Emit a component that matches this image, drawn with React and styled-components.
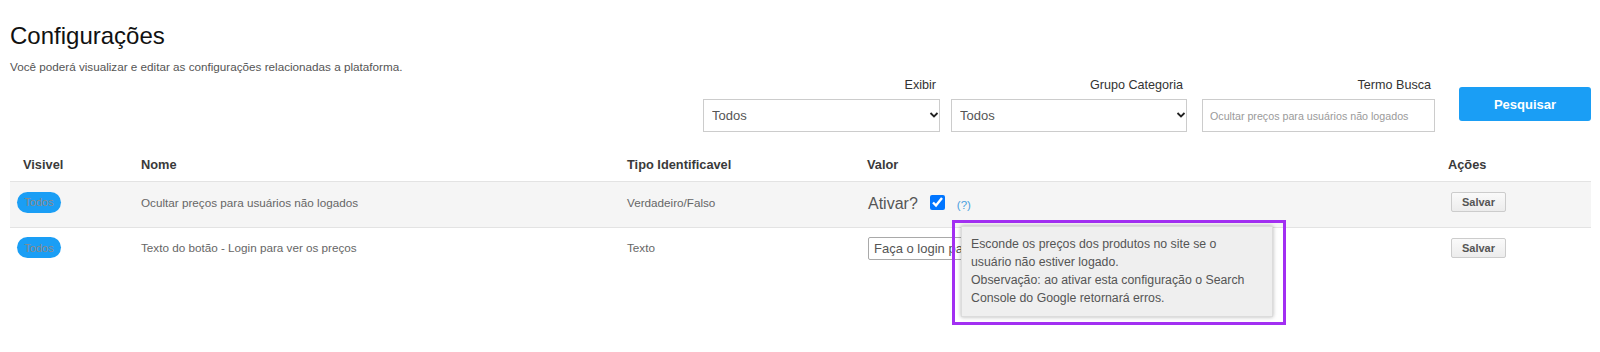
import React from "react";
import styled, { createGlobalStyle } from "styled-components";

const GlobalStyle = createGlobalStyle`
  html, body { margin: 0; padding: 0; background: #fff; }
  body { font-family: "Liberation Sans", Arial, sans-serif; }
  * { box-sizing: border-box; }
`;

const FONT = `"Liberation Sans", Arial, sans-serif`;

const Page = styled.div`
  width: 1600px;
  min-height: 352px;
  padding: 22px 9px 0 10px;
`;

const Title = styled.h1`
  margin: 0;
  font-size: 24px;
  line-height: 28px;
  font-weight: 400;
  color: #111;
`;

const Subtitle = styled.p`
  margin: 10px 0 0;
  font-size: 11.7px;
  line-height: 14px;
  color: #555;
`;

const Filters = styled.div`
  display: flex;
  justify-content: flex-end;
  align-items: flex-start;
  margin-top: 4px;
`;

const Field = styled.div`
  display: flex;
  flex-direction: column;
  width: ${(p) => p.$width}px;
  margin-left: ${(p) => p.$gap || 0}px;
`;

const Label = styled.label`
  font-size: 12.6px;
  line-height: 14px;
  color: #333;
  text-align: right;
  padding-right: 4px;
  margin-bottom: 7px;
`;

const SelectWrap = styled.div`
  position: relative;
`;

const Select = styled.select`
  appearance: none;
  width: 100%;
  height: 33px;
  border: 1px solid #ccc;
  border-radius: 0;
  background: #fff;
  padding: 0 20px 0 8px;
  font: 13px ${FONT};
  color: #555;
  outline: none;
`;

const Chevron = styled.svg`
  position: absolute;
  right: 1px;
  top: 13px;
  pointer-events: none;
`;

const SearchInput = styled.input`
  width: 100%;
  height: 33px;
  border: 1px solid #ccc;
  padding: 0 7px;
  font: 10.7px ${FONT};
  color: #555;
  outline: none;
  &::placeholder {
    color: #9a9a9a;
  }
`;

const SearchButton = styled.button`
  width: 132px;
  height: 34px;
  margin-left: 24px;
  margin-top: 9px;
  border: none;
  border-radius: 3px;
  background: #1a9ef5;
  color: #fff;
  font: 700 13px ${FONT};
  cursor: pointer;
`;

const COLS = "118px 486px 240px 581px 1fr";

const Table = styled.div`
  margin-top: 16px;
`;

const HeadRow = styled.div`
  display: grid;
  grid-template-columns: ${COLS};
  height: 34px;
  align-items: center;
  border-bottom: 1px solid #e3e3e3;
`;

const HeadCell = styled.div`
  padding-left: 13px;
  font-size: 12.8px;
  font-weight: 700;
  color: #3a3a3a;
`;

const Row = styled.div`
  display: grid;
  grid-template-columns: ${COLS};
  height: 45px;
  padding-bottom: 5px;
  align-items: center;
  background: ${(p) => (p.$shaded ? "#f5f5f5" : "transparent")};
  & + & {
    border-top: 1px solid #e3e3e3;
  }
`;

const Cell = styled.div`
  padding-left: ${(p) => (p.$pad != null ? p.$pad : 13)}px;
  font-size: 11.7px;
  color: #666;
`;

const Pill = styled.span`
  display: inline-flex;
  align-items: center;
  justify-content: center;
  width: 44px;
  height: 21px;
  border-radius: 11px;
  background: #1a9ef5;
  color: #8a8a8a;
  font-size: 11px;
`;

const ValueCell = styled.div`
  position: relative;
  align-self: stretch;
  display: flex;
  align-items: center;
  padding-left: 14px;
`;

const Ativar = styled.span`
  font-size: 16px;
  color: #555;
  margin-top: 3px;
`;

const Check = styled.input`
  width: 15px;
  height: 15px;
  margin: 0 0 0 12px;
  accent-color: #0075ff;
`;

const Help = styled.span`
  margin-left: 12px;
  margin-top: 5px;
  font-size: 11.5px;
  color: #4a9fe0;
`;

const ValueInput = styled.input`
  width: 260px;
  height: 23px;
  border: 1px solid #a9a9a9;
  border-radius: 2px;
  padding: 0 5px;
  font: 13px ${FONT};
  color: #555;
  outline: none;
  margin-top: 2px;
`;

const SaveButton = styled.button`
  width: 55px;
  height: 20px;
  margin-left: 3px;
  border: 1px solid #ccc;
  border-radius: 2px;
  background: linear-gradient(#fafafa, #ececec);
  color: #555;
  font: 700 11px ${FONT};
  padding: 0;
`;

const Annotation = styled.div`
  position: absolute;
  left: 98px;
  top: 38px;
  z-index: 10;
  border: 3px solid #a22ff2;
  padding: 3px 10px 5px 6px;
`;

const Tooltip = styled.div`
  width: 312px;
  background: #efefef;
  border: 1px solid #dcdcdc;
  box-shadow: 0 0 4px rgba(0, 0, 0, 0.3);
  padding: 8px 9px 9px 9px;
  font-size: 12.3px;
  line-height: 18px;
  color: #555;
`;

const ChevronIcon = () => (
  <Chevron width="10" height="6" viewBox="0 0 10 6">
    <path d="M1.5 1 L5 4.5 L8.5 1" fill="none" stroke="#222" strokeWidth="1.8" />
  </Chevron>
);

export default function App() {
  return (
    <>
      <GlobalStyle />
      <Page>
        <Title>Configurações</Title>
        <Subtitle>Você poderá visualizar e editar as configurações relacionadas a plataforma.</Subtitle>

        <Filters>
          <Field $width={237}>
            <Label>Exibir</Label>
            <SelectWrap>
              <Select defaultValue="Todos">
                <option>Todos</option>
              </Select>
              <ChevronIcon />
            </SelectWrap>
          </Field>
          <Field $width={236} $gap={11}>
            <Label>Grupo Categoria</Label>
            <SelectWrap>
              <Select defaultValue="Todos">
                <option>Todos</option>
              </Select>
              <ChevronIcon />
            </SelectWrap>
          </Field>
          <Field $width={233} $gap={15}>
            <Label>Termo Busca</Label>
            <SearchInput placeholder="Ocultar preços para usuários não logados" />
          </Field>
          <SearchButton>Pesquisar</SearchButton>
        </Filters>

        <Table>
          <HeadRow>
            <HeadCell>Visivel</HeadCell>
            <HeadCell>Nome</HeadCell>
            <HeadCell>Tipo Identificavel</HeadCell>
            <HeadCell>Valor</HeadCell>
            <HeadCell>Ações</HeadCell>
          </HeadRow>

          <Row $shaded>
            <Cell $pad={7}><Pill>Todos</Pill></Cell>
            <Cell>Ocultar preços para usuários não logados</Cell>
            <Cell>Verdadeiro/Falso</Cell>
            <ValueCell>
              <Ativar>Ativar?</Ativar>
              <Check type="checkbox" defaultChecked />
              <Help>(?)</Help>
              <Annotation>
                <Tooltip>
                  Esconde os preços dos produtos no site se o<br />
                  usuário não estiver logado.<br />
                  Observação: ao ativar esta configuração o Search Console do Google retornará erros.
                </Tooltip>
              </Annotation>
            </ValueCell>
            <Cell><SaveButton>Salvar</SaveButton></Cell>
          </Row>

          <Row>
            <Cell $pad={7}><Pill>Todos</Pill></Cell>
            <Cell>Texto do botão - Login para ver os preços</Cell>
            <Cell>Texto</Cell>
            <ValueCell>
              <ValueInput defaultValue="Faça o login para ver os preços" />
            </ValueCell>
            <Cell><SaveButton>Salvar</SaveButton></Cell>
          </Row>
        </Table>
      </Page>
    </>
  );
}
